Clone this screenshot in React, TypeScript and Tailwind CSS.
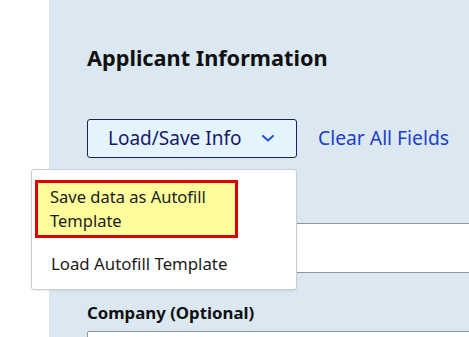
const font = { fontFamily: '"Noto Sans", "Open Sans", sans-serif' };

function AutofillMenu() {
  return (
    <div className="absolute left-[-56px] top-[50px] z-10 w-[266px] rounded-[3px] border border-[#c9ced4] bg-white pb-[13px] pl-[3px] pt-[10px] shadow-[0_1px_2px_rgba(0,0,0,0.08)]">
      <div className="w-[203px] border-[3px] border-[#e00000] bg-[#fdfd9c] px-[12px] py-[2px] text-[16.5px] leading-[24px] text-[#1b1b1b]">
        Save data as Autofill Template
      </div>
      <div className="mt-[14px] px-[16px] text-[16.8px] leading-[24px] text-[#1b1b1b]">
        Load Autofill Template
      </div>
    </div>
  );
}

export default function App() {
  return (
    <div className="flex h-[337px] w-[469px] overflow-hidden bg-white" style={font}>
      <div className="ml-[49px] flex-1 bg-[#dbe7f1] pl-[38px] pt-[43px]">
        <h2 className="text-[21.7px] font-bold leading-[30px] text-[#111]">Applicant Information</h2>

        <div className="relative mt-[46px] flex items-center gap-[21px]">
          <button
            type="button"
            className="flex h-[39px] w-[210px] items-center rounded-[3px] border border-[#1a1f6e] bg-[#e4f4fd] pl-[20px] text-[19px] text-[#16186b]"
          >
            <span>Load/Save Info</span>
            <svg className="ml-[21px]" width="12" height="7" viewBox="0 0 12 7" fill="none">
              <path d="M1 1L6 5.5L11 1" stroke="#2453d6" strokeWidth="2" strokeLinecap="round" strokeLinejoin="round" />
            </svg>
          </button>
          <span className="text-[19.3px] text-[#1c3fc8]">Clear All Fields</span>
          <AutofillMenu />
        </div>

        <div className="mt-[65px] h-[50px] w-[420px] border border-[#8a98a6] bg-white" />

        <div className="mt-[28px] text-[16.8px] font-bold leading-[24px] text-[#111]">Company (Optional)</div>
        <div className="mt-[6px] h-[50px] w-[420px] rounded-[2px] border border-[#8a98a6] bg-white" />
      </div>
    </div>
  );
}
